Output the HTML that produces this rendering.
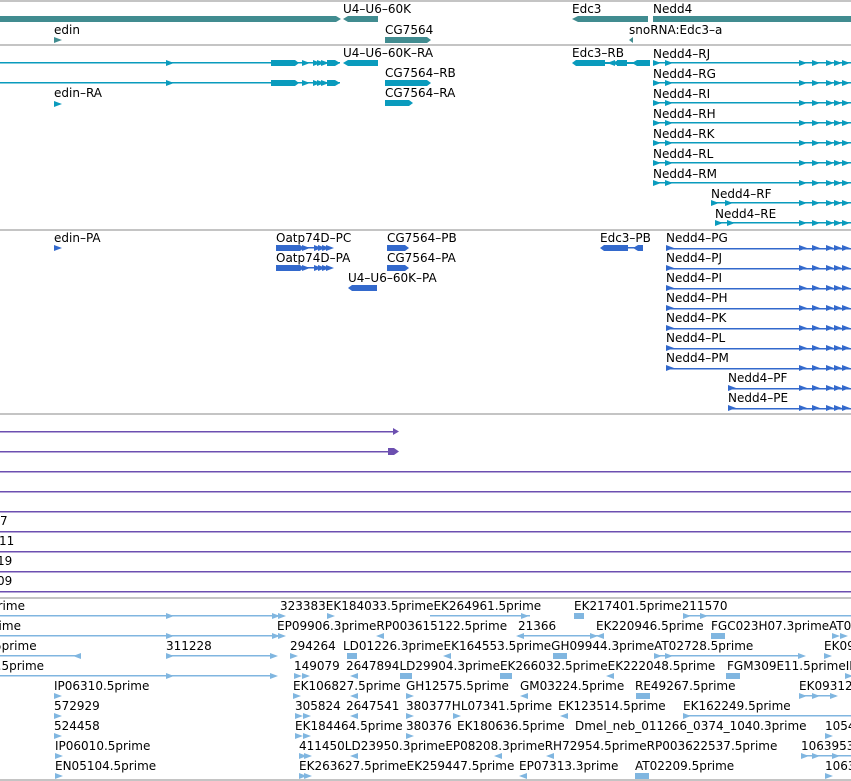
<!DOCTYPE html>
<html><head><meta charset="utf-8"><style>
html,body{margin:0;padding:0;background:#fff;width:851px;height:781px;overflow:hidden}
svg text{font-family:"DejaVu Sans","Liberation Sans",sans-serif;font-size:12px;fill:#000}
</style></head><body>
<svg width="851" height="781" xmlns="http://www.w3.org/2000/svg">
<defs>
<polygon id="ra" points="0,-3 8,0 0,3"/>
<polygon id="la" points="8,-3 0,0 8,3"/>
</defs>
<!-- separators -->
<g fill="#c4c4c4">
<rect x="0" y="0" width="851" height="2"/>
<rect x="0" y="44" width="851" height="2"/>
<rect x="0" y="229" width="851" height="2"/>
<rect x="0" y="413" width="851" height="2"/>
<rect x="0" y="597" width="851" height="2"/>
<rect x="0" y="779" width="851" height="2"/>
</g>

<!-- Track 1 genes -->
<g fill="#418c90">
<rect x="0" y="16" width="336" height="6"/><polygon points="336,16 341,19 336,22"/>
<polygon points="343,19 348,16 378,16 378,22 348,22"/>
<polygon points="54,37 62,40 54,43"/>
<rect x="385" y="37" width="42" height="6"/><polygon points="427,37 431,40 427,43"/>
<polygon points="572,19 578,16 648,16 648,22 578,22"/>
<rect x="653" y="16" width="198" height="6"/>
<polygon points="629,40 633,37 633,43"/>
</g>
<text x="343" y="13">U4–U6–60K</text>
<text x="54" y="34">edin</text>
<text x="385" y="34">CG7564</text>
<text x="572" y="13">Edc3</text>
<text x="653" y="13">Nedd4</text>
<text x="629" y="34">snoRNA:Edc3–a</text>

<!-- Track 2 cyan -->
<g fill="#0a9bbd" stroke="none">
<rect x="0" y="62" width="340" height="1.5"/>
<rect x="0" y="82" width="340" height="1.5"/>
<use href="#ra" x="166" y="63"/><use href="#ra" x="166" y="83"/>
<rect x="271" y="60" width="24" height="6"/><polygon points="295,60 299,63 295,66"/>
<rect x="271" y="80" width="24" height="6"/><polygon points="295,80 299,83 295,86"/>
<use href="#ra" x="302" y="63"/><use href="#ra" x="302" y="83"/>
<use href="#ra" x="313" y="63"/><use href="#ra" x="317" y="63"/><use href="#ra" x="321" y="63"/>
<use href="#ra" x="313" y="83"/><use href="#ra" x="317" y="83"/><use href="#ra" x="321" y="83"/>
<rect x="327" y="60" width="8" height="6"/><polygon points="335,60 340,63 335,66"/>
<rect x="327" y="80" width="8" height="6"/><polygon points="335,80 340,83 335,86"/>
<polygon points="343,63 348,60 378,60 378,66 348,66"/>
<rect x="385" y="80" width="42" height="6"/><polygon points="427,80 431,83 427,86"/>
<polygon points="54,101 62,104 54,107"/>
<rect x="385" y="100" width="24" height="6"/><polygon points="409,100 413,103 409,106"/>
<polygon points="572,63 576,60 605,60 605,66 576,66"/>
<rect x="605" y="62" width="30" height="2"/>
<use href="#la" x="607" y="63"/><use href="#la" x="611" y="63"/>
<rect x="617" y="60" width="10" height="6"/>
<polygon points="632,63 637,60 650,60 650,66 637,66"/>
</g>
<text x="343" y="57">U4–U6–60K–RA</text>
<text x="385" y="77">CG7564–RB</text>
<text x="54" y="97">edin–RA</text>
<text x="385" y="97">CG7564–RA</text>
<text x="572" y="57">Edc3–RB</text>
<g fill="#0a9bbd">
<g id="nr">
<rect x="653" y="62" width="198" height="1.5"/>
<use href="#ra" x="653" y="63"/><use href="#ra" x="665" y="63"/>
<use href="#ra" x="799" y="63"/><use href="#ra" x="812" y="63"/>
<use href="#ra" x="826" y="63"/><use href="#ra" x="834" y="63"/><use href="#ra" x="842" y="63"/>
</g>
<use href="#nr" y="20"/><use href="#nr" y="40"/><use href="#nr" y="60"/>
<use href="#nr" y="80"/><use href="#nr" y="100"/><use href="#nr" y="120"/>
<g id="nrf">
<rect x="711" y="202" width="140" height="1.5"/>
<use href="#ra" x="711" y="203"/><use href="#ra" x="725" y="203"/>
<use href="#ra" x="799" y="203"/><use href="#ra" x="812" y="203"/>
<use href="#ra" x="826" y="203"/><use href="#ra" x="834" y="203"/><use href="#ra" x="842" y="203"/>
</g>
<rect x="715" y="222" width="136" height="1.5"/>
<use href="#ra" x="715" y="223"/><use href="#ra" x="727" y="223"/>
<use href="#ra" x="799" y="223"/><use href="#ra" x="812" y="223"/>
<use href="#ra" x="826" y="223"/><use href="#ra" x="834" y="223"/><use href="#ra" x="842" y="223"/>
</g>
<text x="653" y="58">Nedd4–RJ</text>
<text x="653" y="78">Nedd4–RG</text>
<text x="653" y="98">Nedd4–RI</text>
<text x="653" y="118">Nedd4–RH</text>
<text x="653" y="138">Nedd4–RK</text>
<text x="653" y="158">Nedd4–RL</text>
<text x="653" y="178">Nedd4–RM</text>
<text x="711" y="198">Nedd4–RF</text>
<text x="715" y="218">Nedd4–RE</text>

<!-- Track 3 blue -->
<g fill="#3369cc">
<polygon points="54,245 62,248 54,251"/>
<g id="oa">
<rect x="276" y="245" width="24" height="6"/><polygon points="300,245 304,248 300,251"/>
<use href="#ra" x="302" y="248"/><rect x="300" y="247" width="30" height="1.5"/>
<use href="#ra" x="314" y="248"/><use href="#ra" x="318" y="248"/><use href="#ra" x="322" y="248"/><use href="#ra" x="326" y="248"/>
</g>
<use href="#oa" y="20"/>
<rect x="387" y="245" width="18" height="6"/><polygon points="405,245 409,248 405,251"/>
<rect x="387" y="265" width="18" height="6"/><polygon points="405,265 409,268 405,271"/>
<polygon points="348,288 352,285 377,285 377,291 352,291"/>
<polygon points="600,248 604,245 628,245 628,251 604,251"/>
<rect x="628" y="247" width="8" height="1.5"/>
<polygon points="633,248 638,245 643,245 643,251 638,251"/>
<g id="np">
<rect x="666" y="248" width="185" height="1.5"/>
<use href="#ra" x="666" y="248"/>
<use href="#ra" x="799" y="248"/><use href="#ra" x="812" y="248"/>
<use href="#ra" x="826" y="248"/><use href="#ra" x="834" y="248"/><use href="#ra" x="842" y="248"/>
</g>
<use href="#np" y="20"/><use href="#np" y="40"/><use href="#np" y="60"/>
<use href="#np" y="80"/><use href="#np" y="100"/><use href="#np" y="120"/>
<rect x="728" y="388" width="123" height="1.5"/><use href="#ra" x="728" y="388"/>
<use href="#ra" x="799" y="388"/><use href="#ra" x="812" y="388"/><use href="#ra" x="826" y="388"/><use href="#ra" x="834" y="388"/><use href="#ra" x="842" y="388"/>
<rect x="728" y="408" width="123" height="1.5"/><use href="#ra" x="728" y="408"/>
<use href="#ra" x="799" y="408"/><use href="#ra" x="812" y="408"/><use href="#ra" x="826" y="408"/><use href="#ra" x="834" y="408"/><use href="#ra" x="842" y="408"/>
</g>
<text x="54" y="242">edin–PA</text>
<text x="276" y="242">Oatp74D–PC</text>
<text x="276" y="262">Oatp74D–PA</text>
<text x="387" y="242">CG7564–PB</text>
<text x="387" y="262">CG7564–PA</text>
<text x="348" y="282">U4–U6–60K–PA</text>
<text x="600" y="242">Edc3–PB</text>
<text x="666" y="242">Nedd4–PG</text>
<text x="666" y="262">Nedd4–PJ</text>
<text x="666" y="282">Nedd4–PI</text>
<text x="666" y="302">Nedd4–PH</text>
<text x="666" y="322">Nedd4–PK</text>
<text x="666" y="342">Nedd4–PL</text>
<text x="666" y="362">Nedd4–PM</text>
<text x="728" y="382">Nedd4–PF</text>
<text x="728" y="402">Nedd4–PE</text>

<!-- Track 4 purple -->
<g fill="#6c4fb0">
<rect x="0" y="431" width="393" height="1.5"/><polygon points="393,428 399,431.5 393,435"/>
<rect x="0" y="451" width="390" height="1.5"/><polygon points="388,448 394,448 399,451.5 394,455 388,455"/>
<rect x="0" y="471" width="851" height="1.5"/>
<rect x="0" y="491" width="851" height="1.5"/>
<rect x="0" y="511" width="851" height="1.5"/>
<rect x="0" y="531" width="851" height="1.5"/>
<rect x="0" y="551" width="851" height="1.5"/>
<rect x="0" y="571" width="851" height="1.5"/>
<rect x="0" y="591" width="851" height="1.5"/>
</g>
<text x="0" y="525">7</text>
<text x="-1" y="545">11</text>
<text x="-3" y="565">19</text>
<text x="-3" y="585">09</text>

<!-- Track 5 ESTs -->
<g fill="#80b6e0">
<rect x="0" y="615" width="280" height="1.5"/><use href="#ra" x="166" y="616"/><use href="#ra" x="272" y="616"/><use href="#ra" x="278" y="616"/>
<rect x="0" y="635" width="280" height="1.5"/><use href="#ra" x="166" y="636"/><use href="#ra" x="272" y="636"/><use href="#ra" x="278" y="636"/>
<rect x="0" y="655" width="76" height="1.5"/><use href="#la" x="73" y="656"/>
<rect x="166" y="655" width="108" height="1.5"/><use href="#ra" x="166" y="656"/><use href="#ra" x="270" y="656"/>
<rect x="0" y="675" width="275" height="1.5"/><use href="#ra" x="166" y="676"/><use href="#ra" x="270" y="676"/>
<use href="#ra" x="54" y="696"/><use href="#ra" x="54" y="716"/><use href="#ra" x="54" y="736"/><use href="#ra" x="55" y="756"/><use href="#ra" x="55" y="776"/>
<use href="#ra" x="327" y="616"/><use href="#la" x="376" y="636"/>
<use href="#ra" x="290" y="656"/><rect x="347" y="653" width="10" height="6"/>
<use href="#ra" x="294" y="676"/><use href="#ra" x="302" y="676"/><use href="#la" x="350" y="676"/><rect x="400" y="673" width="12" height="6"/>
<use href="#ra" x="293" y="696"/><use href="#la" x="350" y="696"/><use href="#ra" x="406" y="696"/>
<use href="#ra" x="295" y="716"/><use href="#ra" x="303" y="716"/><use href="#la" x="350" y="716"/><use href="#ra" x="406" y="716"/>
<use href="#ra" x="295" y="736"/><use href="#ra" x="303" y="736"/><use href="#ra" x="406" y="736"/><use href="#ra" x="453" y="716"/>
<use href="#ra" x="299" y="756"/><use href="#ra" x="304" y="756"/><use href="#la" x="350" y="756"/>
<use href="#ra" x="299" y="776"/><use href="#ra" x="304" y="776"/>
<rect x="430" y="615" width="100" height="1.5"/><use href="#ra" x="521" y="616"/>
<rect x="574" y="613" width="10" height="6"/>
<rect x="683" y="615" width="168" height="1.5"/><use href="#ra" x="683" y="616"/><use href="#ra" x="700" y="616"/>
<rect x="518" y="635" width="80" height="1.5"/><use href="#la" x="516" y="636"/><use href="#ra" x="590" y="636"/><use href="#la" x="596" y="636"/>
<rect x="711" y="633" width="14" height="6"/>
<use href="#ra" x="832" y="636"/><use href="#ra" x="840" y="636"/>
<use href="#la" x="443" y="656"/><rect x="553" y="653" width="14" height="6"/>
<rect x="654" y="655" width="148" height="1.5"/><use href="#ra" x="654" y="656"/><use href="#ra" x="665" y="656"/><use href="#ra" x="798" y="656"/>
<use href="#ra" x="824" y="656"/>
<rect x="500" y="673" width="12" height="6"/><use href="#la" x="606" y="676"/>
<rect x="726" y="673" width="14" height="6"/><use href="#ra" x="845" y="676"/>
<use href="#la" x="520" y="696"/><rect x="636" y="693" width="14" height="6"/>
<rect x="799" y="695" width="37" height="1.5"/><use href="#ra" x="799" y="696"/><use href="#ra" x="812" y="696"/><use href="#ra" x="830" y="696"/>
<use href="#la" x="560" y="716"/>
<rect x="683" y="715" width="168" height="1.5"/><use href="#ra" x="683" y="716"/>
<use href="#ra" x="825" y="736"/>
<use href="#la" x="494" y="756"/><use href="#la" x="546" y="756"/>
<rect x="801" y="755" width="50" height="1.5"/><use href="#ra" x="801" y="756"/><use href="#ra" x="812" y="756"/><use href="#ra" x="832" y="756"/>
<use href="#la" x="519" y="776"/><rect x="635" y="773" width="14" height="6"/><use href="#ra" x="825" y="776"/>
</g>
<text x="-10" y="610">prime</text>
<text x="280" y="610">323383EK184033.5primeEK264961.5prime</text>
<text x="574" y="610">EK217401.5prime211570</text>
<text x="-14" y="630">prime</text>
<text x="277" y="630">EP09906.3primeRP003615122.5prime</text>
<text x="518" y="630">21366</text>
<text x="596" y="630">EK220946.5prime</text>
<text x="711" y="630">FGC023H07.3prime</text>
<text x="829" y="630">AT0</text>
<text x="-6" y="650">5prime</text>
<text x="166" y="650">311228</text>
<text x="290" y="650">294264</text>
<text x="343" y="650">LD01226.3primeEK164553.5primeGH09944.3primeAT02728.5prime</text>
<text x="824" y="650">EK09</text>
<text x="-10" y="670">1.5prime</text>
<text x="294" y="670">149079</text>
<text x="346" y="670">2647894LD29904.3primeEK266032.5primeEK222048.5prime</text>
<text x="727" y="670">FGM309E11.5primeIP</text>
<text x="54" y="690">IP06310.5prime</text>
<text x="293" y="690">EK106827.5prime</text>
<text x="406" y="690">GH12575.5prime</text>
<text x="520" y="690">GM03224.5prime</text>
<text x="635" y="690">RE49267.5prime</text>
<text x="799" y="690">EK09312</text>
<text x="54" y="710">572929</text>
<text x="295" y="710">305824</text>
<text x="346" y="710">2647541</text>
<text x="406" y="710">380377HL07341.5prime</text>
<text x="558" y="710">EK123514.5prime</text>
<text x="683" y="710">EK162249.5prime</text>
<text x="54" y="730">524458</text>
<text x="295" y="730">EK184464.5prime</text>
<text x="406" y="730">380376</text>
<text x="457" y="730">EK180636.5prime</text>
<text x="575" y="730">Dmel_neb_011266_0374_1040.3prime</text>
<text x="825" y="730">1054</text>
<text x="55" y="750">IP06010.5prime</text>
<text x="299" y="750">411450LD23950.3primeEP08208.3primeRH72954.5primeRP003622537.5prime</text>
<text x="801" y="750">1063953</text>
<text x="55" y="770">EN05104.5prime</text>
<text x="299" y="770">EK263627.5primeEK259447.5prime</text>
<text x="519" y="770">EP07313.3prime</text>
<text x="635" y="770">AT02209.5prime</text>
<text x="825" y="770">1063</text>
</svg>
</body></html>
